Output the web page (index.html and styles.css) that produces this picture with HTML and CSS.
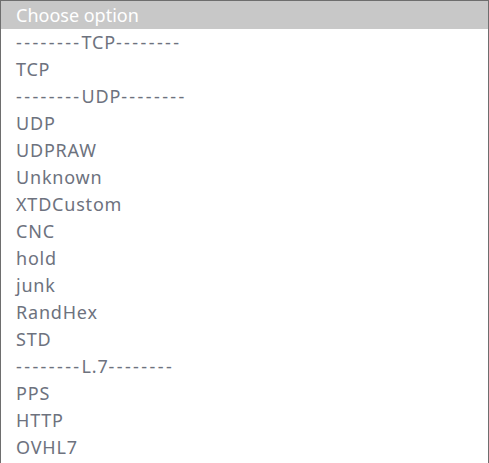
FILE: index.html
```html
<!DOCTYPE html>
<html>
<head>
<meta charset="utf-8">
<link rel="stylesheet" href="styles.css">
</head>
<body>
<div class="select">
  <div class="option header">Choose option</div>
  <div class="option"><span class="dash">--------</span>TCP<span class="dash">--------</span></div>
  <div class="option">TCP</div>
  <div class="option"><span class="dash">--------</span>UDP<span class="dash">--------</span></div>
  <div class="option">UDP</div>
  <div class="option">UDPRAW</div>
  <div class="option">Unknown</div>
  <div class="option">XTDCustom</div>
  <div class="option">CNC</div>
  <div class="option">hold</div>
  <div class="option">junk</div>
  <div class="option">RandHex</div>
  <div class="option">STD</div>
  <div class="option"><span class="dash">--------</span>L.7<span class="dash">--------</span></div>
  <div class="option">PPS</div>
  <div class="option">HTTP</div>
  <div class="option">OVHL7</div>
</div>
</body>
</html>
```
FILE: styles.css
```css
html, body {
  margin: 0;
  padding: 0;
  background: #ffffff;
}
.select {
  width: 489px;
  box-sizing: border-box;
  border: 1px solid #6e6e6e;
  padding-bottom: 20px;
  font-family: "Noto Sans", sans-serif;
  font-size: 18px;
  letter-spacing: 0.8px;
  color: #6d727e;
}
.option {
  height: 27px;
  line-height: 27px;
  padding-left: 15px;
  white-space: nowrap;
}
.dash {
  letter-spacing: 2.4px;
}
.header {
  height: 28px;
  line-height: 28px;
  letter-spacing: 0;
  background: #c8c8c8;
  color: #ffffff;
}
```
